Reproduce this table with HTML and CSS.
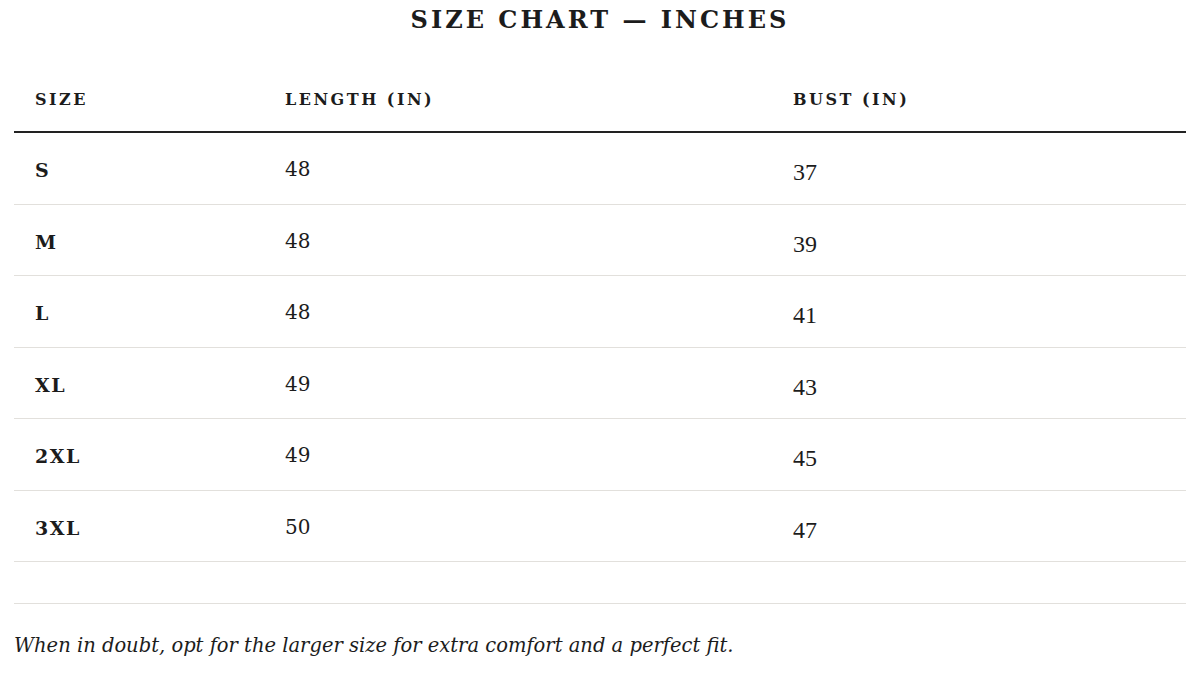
FILE: index.html
```html
<!DOCTYPE html>
<html lang="en">
<head>
<meta charset="utf-8">
<title>Size Chart</title>
<link rel="stylesheet" href="styles.css">
</head>
<body>
<main class="page">
  <h1 class="title">SIZE CHART — INCHES</h1>
  <table class="chart">
    <thead>
      <tr>
        <th class="c1">SIZE</th>
        <th class="c2">LENGTH (IN)</th>
        <th class="c3">BUST (IN)</th>
      </tr>
    </thead>
    <tbody>
      <tr><td class="size">S</td><td class="len">48</td><td class="bust">37</td></tr>
      <tr><td class="size">M</td><td class="len">48</td><td class="bust">39</td></tr>
      <tr><td class="size">L</td><td class="len">48</td><td class="bust">41</td></tr>
      <tr><td class="size">XL</td><td class="len">49</td><td class="bust">43</td></tr>
      <tr><td class="size">2XL</td><td class="len">49</td><td class="bust">45</td></tr>
      <tr><td class="size">3XL</td><td class="len">50</td><td class="bust">47</td></tr>
      <tr class="empty"><td></td><td></td><td></td></tr>
    </tbody>
  </table>
  <p class="note">When in doubt, opt for the larger size for extra comfort and a perfect fit.</p>
</main>
</body>
</html>
```
FILE: styles.css
```css
html, body {
  margin: 0;
  padding: 0;
  background: #ffffff;
}
body {
  color: #1c1c1c;
  font-family: "DejaVu Serif", "Liberation Serif", serif;
}
.page {
  padding: 0 14px;
}
.title {
  margin: 0;
  height: 70px;
  box-sizing: border-box;
  padding-top: 5px;
  line-height: 30px;
  font-size: 24px;
  font-weight: bold;
  letter-spacing: 3px;
  text-align: center;
}
.chart {
  width: 100%;
  border-collapse: collapse;
  table-layout: fixed;
}
.c1 { width: 208px; }
.c2 { width: 466px; }
.chart th {
  text-align: left;
  padding: 18px 21px 19px;
  line-height: 24px;
  font-size: 16px;
  font-weight: bold;
  letter-spacing: 2.5px;
  border-bottom: 2px solid #222222;
}
.chart td {
  padding: 26px 21px 22px;
  line-height: 22.5px;
  border-bottom: 1px solid #e2e0dc;
  font-size: 18px;
}
.chart td.size {
  font-weight: bold;
  font-size: 19px;
  letter-spacing: 1.5px;
}
.chart td.len {
  font-family: "DejaVu Serif", serif;
  font-size: 20px;
  padding-top: 25px;
  padding-bottom: 23px;
}
.chart td.bust {
  font-family: "Liberation Serif", serif;
  font-size: 24px;
  padding-top: 28px;
  padding-bottom: 20px;
}
.chart tr.empty td {
  padding: 0;
  height: 41px;
}
.note {
  margin: 30px 0 0;
  font-style: italic;
  font-size: 19.5px;
  line-height: 24px;
}
```
